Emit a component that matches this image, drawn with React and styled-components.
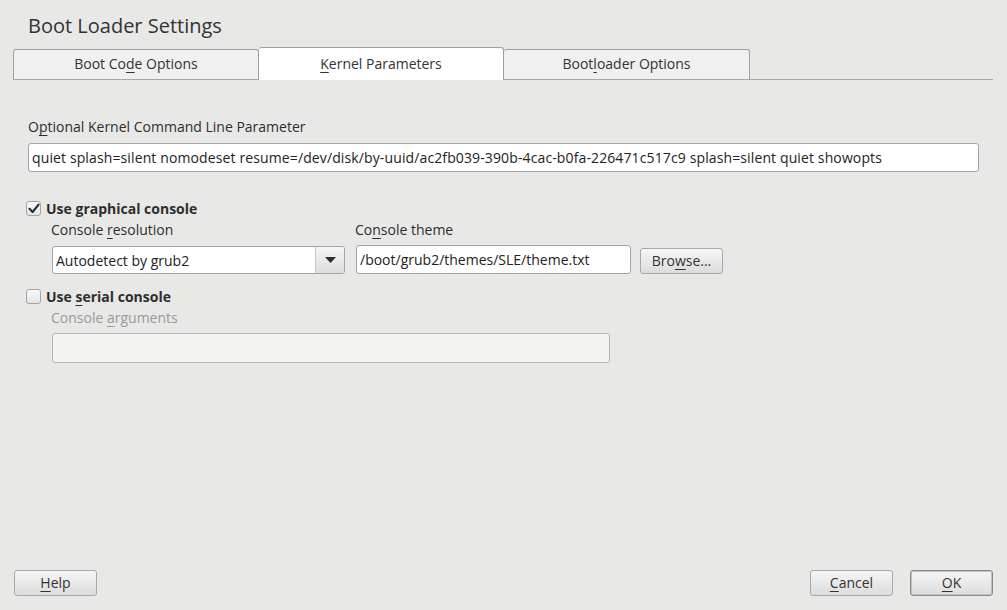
import React from 'react';
import styled, {createGlobalStyle} from 'styled-components';

const GlobalStyle = createGlobalStyle`
  html, body {
    margin: 0;
    padding: 0;
    background: #e8e8e7;
  }
  * {
    box-sizing: border-box;
  }
`;

const Window = styled.div`
  width: 1007px;
  height: 610px;
  display: flex;
  flex-direction: column;
  background: #e8e8e7;
  font-family: "Open Sans", "DejaVu Sans", sans-serif;
  font-size: 14px;
  color: #2e2e2e;
  overflow: hidden;
`;

const Title = styled.h1`
  margin: 0;
  padding: 12px 0 0 28px;
  height: 47px;
  font-size: 20px;
  font-weight: 400;
  line-height: 28px;
  color: #333;
`;

const TabBar = styled.div`
  display: flex;
  align-items: flex-end;
  height: 33px;
  margin: 0 14px 0 13px;
  border-bottom: 1px solid #a8a8a8;
`;

const Tab = styled.div`
  width: ${props => props.active ? '245px' : '246px'};
  height: ${props => props.active ? '33px' : '30px'};
  margin-bottom: ${props => props.active ? '-1px' : '0'};
  display: flex;
  align-items: center;
  justify-content: center;
  padding-bottom: ${props => props.active ? '2px' : '2px'};
  background: ${props => props.active ? '#ffffff' : '#f0f0f0'};
  border: 1px solid #a0a0a0;
  border-bottom: none;
  border-left: ${props => props.noLeft ? 'none' : '1px solid #a0a0a0'};
  border-radius: 3px 3px 0 0;
  color: #333;
`;

const Key = styled.span`
  text-decoration: underline;
  text-underline-offset: 3px;
`;

const Content = styled.div`
  display: flex;
  flex-direction: column;
  padding: 37px 28px 0 26px;
`;

const Label = styled.div`
  line-height: 20px;
  padding-left: ${props => props.indent || 0}px;
  margin-top: ${props => props.mt || 0}px;
  color: ${props => props.disabled ? '#9a9a9a' : '#2e2e2e'};
`;

const TextField = styled.div`
  height: ${props => props.h || 29}px;
  width: ${props => props.w ? props.w + 'px' : 'auto'};
  margin-top: ${props => props.mt || 0}px;
  margin-left: ${props => props.ml || 0}px;
  display: flex;
  align-items: center;
  padding-left: 3px;
  letter-spacing: ${props => props.spacing || 0}px;
  background: ${props => props.disabled ? '#f3f3f2' : '#ffffff'};
  border: 1px solid ${props => props.disabled ? '#b4b4b4' : '#a4a4a4'};
  border-radius: 3px;
  white-space: nowrap;
  overflow: hidden;
  color: #222;
`;

const CheckRow = styled.label`
  display: flex;
  align-items: center;
  gap: 5px;
  height: 20px;
  margin-top: ${props => props.mt || 0}px;
  font-weight: 700;
  color: #2e2e2e;
`;

const CheckBox = styled.span`
  width: 15px;
  height: 15px;
  display: flex;
  align-items: center;
  justify-content: center;
  border: 1px solid #a4a4a4;
  border-radius: 3px;
  background: linear-gradient(#fafafa, #e4e4e4);
`;

const SubSection = styled.div`
  display: flex;
  align-items: flex-end;
  gap: 10px;
  padding-left: 25px;
  margin-top: 2px;
`;

const Column = styled.div`
  display: flex;
  flex-direction: column;
  gap: ${props => props.gap || 5}px;
  width: ${props => props.w}px;
`;

const Select = styled.div`
  height: 28px;
  display: flex;
  background: #fff;
  border: 1px solid #a4a4a4;
  border-radius: 3px;
  overflow: hidden;
  margin-left: 1px;
`;

const SelectText = styled.div`
  flex: 1;
  display: flex;
  align-items: center;
  padding-left: 3px;
  color: #222;
`;

const SelectArrow = styled.div`
  width: 29px;
  display: flex;
  align-items: center;
  justify-content: center;
  border-left: 1px solid #c8c8c8;
  background: linear-gradient(#f4f4f4, #dedede);
`;

const Button = styled.button`
  width: ${props => props.w || 83}px;
  height: 26px;
  margin-left: ${props => props.ml || 0}px;
  font-family: inherit;
  font-size: 14px;
  color: #333;
  background: linear-gradient(#f6f6f6, #dcdcdc);
  border: 1px solid ${props => props.primary ? '#8a8a8a' : '#a8a8a8'};
  box-shadow: ${props => props.primary ? 'inset 0 0 0 1px #c0c0c0' : 'none'};
  border-radius: 3px;
  padding: 0;
  line-height: 20px;
`;

const Footer = styled.div`
  margin-top: auto;
  display: flex;
  align-items: center;
  gap: 17px;
  padding: 0 14px 14px 14px;
`;

const Spacer = styled.div`
  flex: 1;
`;

const CheckMark = () => (
  <svg width="12" height="11" viewBox="0 0 12 11">
    <path d="M1.5 5.8 L4.6 9 L10.6 1.6" fill="none" stroke="#2a2a2a" strokeWidth="2.1" strokeLinecap="round" strokeLinejoin="round" />
  </svg>
);

const ArrowDown = () => (
  <svg width="11" height="6" viewBox="0 0 11 6">
    <path d="M0 0 L11 0 L5.5 6 Z" fill="#2e2e2e" />
  </svg>
);

const kernelLine = 'quiet splash=silent nomodeset resume=/dev/disk/by-uuid/ac2fb039-390b-4cac-b0fa-226471c517c9 splash=silent quiet showopts';

const App = () => {
  return (
    <Window>
      <GlobalStyle />
      <Title>Boot Loader Settings</Title>
      <TabBar>
        <Tab>Boot Co<Key>d</Key>e Options</Tab>
        <Tab active noLeft><span><Key>K</Key>ernel Parameters</span></Tab>
        <Tab noLeft>Boot<Key>l</Key>oader Options</Tab>
      </TabBar>
      <Content>
        <Label indent={2}>O<Key>p</Key>tional Kernel Command Line Parameter</Label>
        <TextField mt={6} ml={2} spacing={0.12}>{kernelLine}</TextField>

        <CheckRow mt={26}>
          <CheckBox><CheckMark /></CheckBox>
          <span>Use <Key>g</Key>raphical console</span>
        </CheckRow>
        <SubSection>
          <Column w={294} gap={6}>
            <Label>Console <Key>r</Key>esolution</Label>
            <Select>
              <SelectText>Autodetect by grub2</SelectText>
              <SelectArrow><ArrowDown /></SelectArrow>
            </Select>
          </Column>
          <Column w={276} gap={5}>
            <Label>Co<Key>n</Key>sole theme</Label>
            <TextField ml={1} h={29}>/boot/grub2/themes/SLE/theme.txt</TextField>
          </Column>
          <Button w={83} ml={-1}>Bro<Key>w</Key>se...</Button>
        </SubSection>

        <CheckRow mt={12}>
          <CheckBox />
          <span>Use <Key>s</Key>erial console</span>
        </CheckRow>
        <Label indent={25} mt={2} disabled>Console <Key>a</Key>rguments</Label>
        <TextField mt={5} ml={26} w={558} h={30} disabled />
      </Content>
      <Footer>
        <Button><Key>H</Key>elp</Button>
        <Spacer />
        <Button><Key>C</Key>ancel</Button>
        <Button primary><Key>O</Key>K</Button>
      </Footer>
    </Window>
  );
};

export default App;
